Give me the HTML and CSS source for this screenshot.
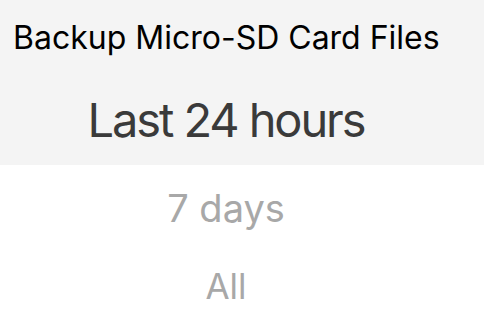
FILE: index.html
```html
<!DOCTYPE html>
<html>
<head>
<meta charset="utf-8">
<link rel="stylesheet" href="styles.css">
</head>
<body>
<div class="screen">
  <div class="top">
    <div class="title">Backup Micro-SD Card Files</div>
    <div class="row selected">Last 24 hours</div>
  </div>
  <div class="row option near">7 days</div>
  <div class="row option far">All</div>
</div>
</body>
</html>
```
FILE: styles.css
```css
html, body {
  margin: 0;
  padding: 0;
  background: #ffffff;
}
.screen {
  width: 484px;
  height: 320px;
  overflow: hidden;
  display: flex;
  flex-direction: column;
  font-family: Inter, "Noto Sans", sans-serif;
}
.top {
  background: #f4f4f4;
  height: 165px;
  display: flex;
  flex-direction: column;
}
.title {
  height: 74px;
  display: flex;
  align-items: center;
  padding-left: 13px;
  font-size: 32px;
  color: #000000;
  letter-spacing: 0;
}
.row {
  display: flex;
  align-items: center;
  justify-content: center;
  padding-right: 32px;
}
.selected {
  flex: 1;
  font-size: 47px;
  color: #3a3a3a;
  letter-spacing: -2.1px;
}
.near {
  height: 86px;
  font-size: 38px;
  color: #a8a8a8;
}
.far {
  height: 69px;
  font-size: 35px;
  color: #a8a8a8;
}
```
